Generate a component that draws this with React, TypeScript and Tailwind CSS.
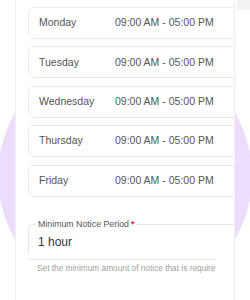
import React from "react";

const days = ["Monday", "Tuesday", "Wednesday", "Thursday", "Friday"];

export default function App() {
  return (
    <div
      className="relative w-[250px] h-[300px] overflow-hidden bg-white"
      style={{ fontFamily: '"Liberation Sans", Arial, sans-serif' }}
    >
      <div className="absolute left-[-2px] top-[49px] w-[254px] h-[254px] rounded-full bg-[#ecdcfd]" />
      <div className="absolute right-0 top-0 w-[13px] h-[10px] bg-[#f3f3f3]" />
      <div className="relative ml-[15px] w-[220px] h-[300px] bg-white border-x border-[#f0f0f0] overflow-hidden">
        <div className="flex flex-col gap-[7.4px] pt-[7px] pl-[12px]">
          {days.map((d) => (
            <div
              key={d}
              className="flex-none w-[240px] h-[32px] flex items-center pl-[10px] border border-[#ebebeb] rounded-[7px] text-[10.5px] text-[#555]"
            >
              <span className="w-[76px]">{d}</span>
              <span>09:00 AM - 05:00 PM</span>
            </div>
          ))}
        </div>
        <div className="relative mt-[27px] ml-[12px] w-[240px] h-[30px] border-t border-l border-[#e6e6e6] rounded-tl-[6px]">
          <div className="absolute left-[7px] top-[-7px] px-[2px] bg-white text-[8.8px] leading-[12px] text-[#555] whitespace-nowrap">
            Minimum Notice Period
            <span className="text-[#e11d48] text-[9px] align-top ml-[2px] font-bold">*</span>
          </div>
          <div className="pt-[10px] pl-[9px] text-[12px] leading-[15px] text-[#333]">1 hour</div>
        </div>
        <div className="ml-[12px] mt-[5px] w-[189px] border-t border-[#ebebeb]" />
        <div className="ml-[21px] mt-[2px] w-[182px] whitespace-nowrap text-[8.3px] leading-[12px] text-[#a0a0a0]">
          Set the minimum amount of notice that is require
        </div>
      </div>
    </div>
  );
}
